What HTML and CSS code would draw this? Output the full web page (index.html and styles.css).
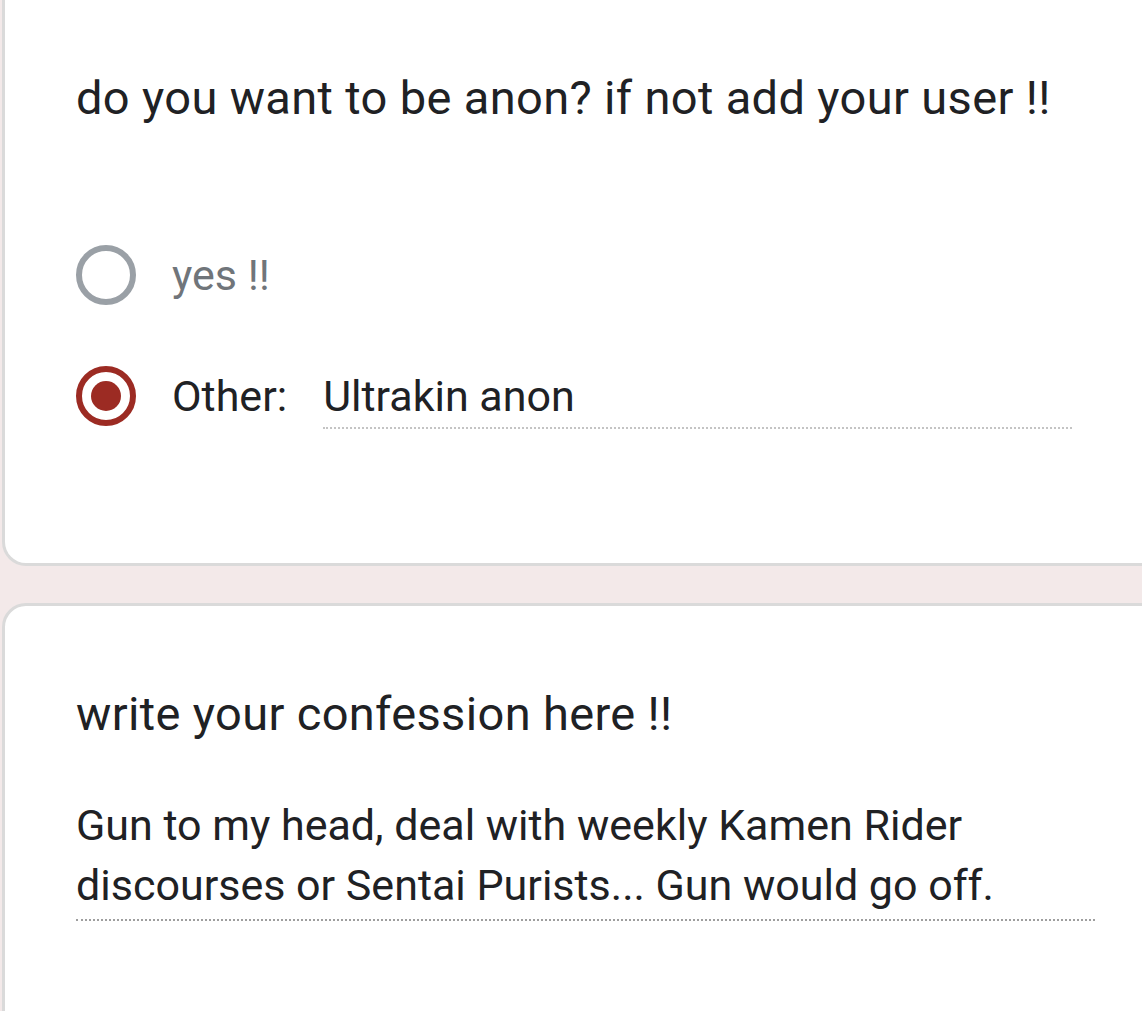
FILE: index.html
```html
<!DOCTYPE html>
<html lang="en">
<head>
  <meta charset="UTF-8">
  <meta name="viewport" content="width=device-width, initial-scale=1.0">
  <title>Confession Form</title>
  <link rel="stylesheet" href="styles.css">
</head>
<body>
  <div class="form">
    <div class="card card-top">
      <div class="question-title">do you want to be anon? if not add your user !!</div>

      <div class="options">
        <label class="option">
          <span class="radio"></span>
          <span class="option-label muted">yes !!</span>
        </label>
        <label class="option">
          <span class="radio checked"></span>
          <span class="option-label">Other:</span>
          <span class="other-input">Ultrakin anon</span>
        </label>
      </div>
    </div>

    <div class="card">
      <div class="question-title">write your confession here !!</div>
      <div class="answer">Gun to my head, deal with weekly Kamen Rider discourses or Sentai Purists... Gun would go off.</div>
    </div>
  </div>
</body>
</html>
```

FILE: styles.css
```css
* {
  margin: 0;
  padding: 0;
  box-sizing: border-box;
}

body {
  background: #f3e9e9;
  font-family: Roboto, 'Noto Sans', Arial, sans-serif;
  color: #202124;
  overflow: hidden;
  height: 1011px;
}

.form {
  display: flex;
  flex-direction: column;
  gap: 37px;
  margin-left: 2px;
  margin-right: -40px;
}

.card {
  background: #fff;
  border: 3px solid #dadada;
  border-radius: 24px;
  padding: 80px 40px 100px 71px;
  min-height: 460px;
}

.card-top {
  border-top: none;
  border-top-left-radius: 0;
  border-top-right-radius: 0;
  padding-top: 70px;
  padding-bottom: 0;
  height: 566px;
}

.question-title {
  font-size: 47px;
  letter-spacing: 0.35px;
  line-height: 56px;
  color: #202124;
}

.options {
  display: flex;
  flex-direction: column;
  gap: 61px;
  margin-top: 119px;
}

.option {
  display: flex;
  align-items: center;
  height: 60px;
}

.radio {
  width: 60px;
  height: 60px;
  border-radius: 50%;
  border: 6px solid #9aa0a6;
  flex-shrink: 0;
  display: flex;
  align-items: center;
  justify-content: center;
}

.radio.checked {
  border-color: #9c2b23;
}

.radio.checked::after {
  content: '';
  width: 30px;
  height: 30px;
  border-radius: 50%;
  background: #9c2b23;
}

.option-label {
  font-size: 43px;
  margin-left: 36px;
  color: #202124;
}

.option-label.muted {
  color: #70757a;
}

.other-input {
  font-size: 43px;
  margin-left: 36px;
  width: 749px;
  padding-bottom: 6px;
  margin-top: 8px;
  border-bottom: 2px dotted #c4c4c4;
}

.answer {
  font-size: 43px;
  line-height: 60px;
  margin-top: 53px;
  width: 1019px;
  padding-bottom: 4px;
  border-bottom: 2px dotted #9e9e9e;
}
```
